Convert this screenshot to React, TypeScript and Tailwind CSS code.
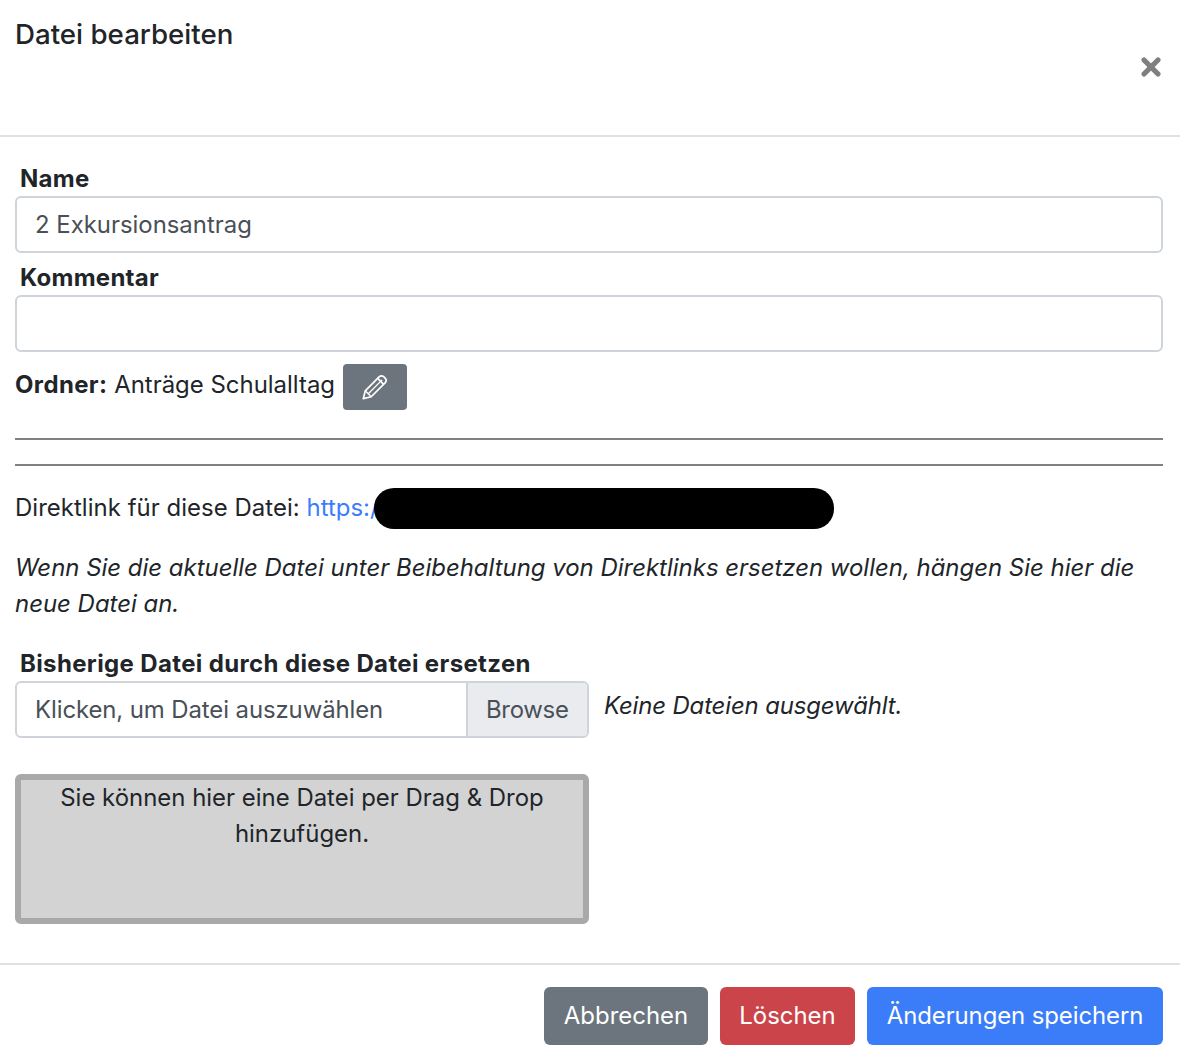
import { X } from "lucide-react";

const font = { fontFamily: "Inter, 'Liberation Sans', sans-serif" };

function FieldLabel({ children }: { children: React.ReactNode }) {
  return <label className="block pl-[5px] h-[35px] leading-[36px] text-[24px] font-bold tracking-[0.25px] text-[#212529]">{children}</label>;
}

function TextBox({ value }: { value?: string }) {
  return (
    <div className="h-[57px] rounded-[6px] border-2 border-[#ced4da] bg-white pl-[18px] leading-[53px] text-[23.9px] text-[#495057]">
      {value}
    </div>
  );
}

function PencilIcon() {
  return (
    <svg viewBox="0 0 24 24" className="w-[26px] h-[26px]" fill="none" stroke="currentColor" strokeWidth={1.6} strokeLinejoin="round">
      <path d="M1.2 22.8 L3 15.5 L16 2.5 Q18 .8 20 2.5 L21.5 4 Q23.2 6 21.5 8 L8.5 21 Z" />
      <path d="M5.8 18.2 L18.6 5.4" strokeWidth={1.2} />
      <path d="M14.5 4 L20 9.5" />
      <path d="M3 15.5 L8.5 21" strokeWidth={1.2} />
    </svg>
  );
}

export default function App() {
  return (
    <div style={font} className="w-[1180px] h-[1064px] bg-white text-[23.95px] text-[#212529] overflow-hidden">
      <header className="h-[137px] border-b-2 border-[#dee2e6] px-[15px] flex justify-between">
        <h5 className="mt-[16px] text-[27.7px] leading-[36px] font-medium">Datei bearbeiten</h5>
        <button className="self-start mt-[53px] text-[#7f7f7f]">
          <X className="w-[28px] h-[28px]" strokeWidth={4.5} />
        </button>
      </header>

      <main className="px-[15px] pr-[17px] pt-[24px]">
        <FieldLabel>Name</FieldLabel>
        <TextBox value="2 Exkursionsantrag" />
        <div className="mt-[7px]">
          <FieldLabel>Kommentar</FieldLabel>
        </div>
        <TextBox />

        <div className="mt-[12px] flex items-start gap-[8px] h-[46px]">
          <span className="leading-[42px]">
            <b className="font-bold tracking-[0.4px]">Ordner:</b> Anträge Schulalltag
          </span>
          <button className="w-[64px] h-[46px] rounded-[4px] bg-[#6c757d] flex items-center justify-center text-white">
            <PencilIcon />
          </button>
        </div>

        <hr className="mt-[28px] border-t-2 border-[#808080]" />
        <hr className="mt-[24px] border-t-2 border-[#808080]" />

        <div className="relative mt-[24px] h-[36px] leading-[36px]">
          <span className="tracking-[0.04px]">Direktlink für diese Datei:</span> <a className="text-[#3b7df8]">https://</a>
          <div className="absolute left-[359px] top-[-2px] w-[460px] h-[41px] rounded-[20px] bg-black" />
        </div>

        <p className="mt-[24px] leading-[36px] italic">
          Wenn Sie die aktuelle Datei unter Beibehaltung von Direktlinks ersetzen wollen, hängen Sie hier die neue Datei an.
        </p>

        <div className="mt-[24px]">
          <FieldLabel>
            <span className="tracking-[0.36px]">Bisherige Datei durch diese Datei ersetzen</span>
          </FieldLabel>
        </div>
        <div className="flex items-start">
          <div className="w-[574px] h-[57px] rounded-[6px] border-2 border-[#ced4da] flex overflow-hidden leading-[53px] text-[#495057]">
            <span className="flex-1 pl-[18px] tracking-[-0.1px]">Klicken, um Datei auszuwählen</span>
            <span className="w-[121px] border-l-2 border-[#ced4da] bg-[#e9ebef] pl-[18px] tracking-[-0.3px]">Browse</span>
          </div>
          <span className="ml-[15px] leading-[50px] italic tracking-[-0.15px]">Keine Dateien ausgewählt.</span>
        </div>

        <div className="mt-[36px] w-[574px] h-[150px] rounded-[6px] border-[6px] border-[#a9a9a9] bg-[#d3d3d3] px-[12px] text-center leading-[36px]">
          Sie können hier eine Datei per Drag &amp; Drop hinzufügen.
        </div>
      </main>

      <footer className="mt-[39px] border-t-2 border-[#dee2e6] pt-[22px] pr-[17px] flex justify-end gap-[12px] text-white">
        <button className="w-[164px] h-[58px] rounded-[6px] bg-[#6c757d]">Abbrechen</button>
        <button className="w-[135px] h-[58px] rounded-[6px] bg-[#cb444a]">Löschen</button>
        <button className="w-[296px] h-[58px] rounded-[6px] bg-[#3b7df8] tracking-[-0.1px]">Änderungen speichern</button>
      </footer>
    </div>
  );
}
